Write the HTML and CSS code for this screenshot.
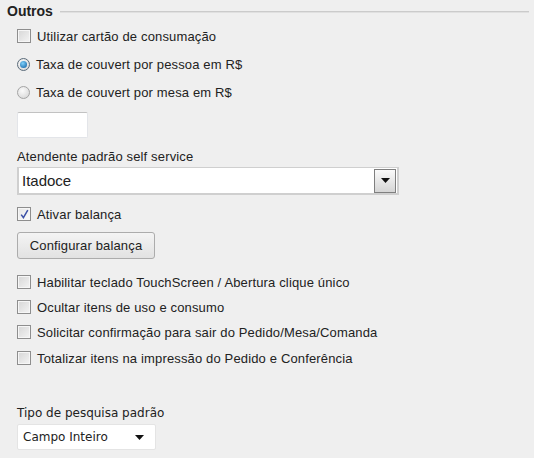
FILE: index.html
```html
<!DOCTYPE html>
<html lang="pt-BR">

<head>
    <meta charset="UTF-8">
    <meta name="viewport" content="width=device-width, initial-scale=1.0">
    <title>Outros</title>
    <link rel="stylesheet" href="styles.css">
</head>

<body>
    <div class="group">
        <div class="group-title">
            <span>Outros</span>
            <div class="group-line"></div>
        </div>

        <div class="group-body">
            <label class="opt first">
                <span class="check"></span>
                Utilizar cartão de consumação
            </label>
            <label class="opt">
                <span class="radio on"></span>
                Taxa de couvert por pessoa em R$
            </label>
            <label class="opt">
                <span class="radio"></span>
                Taxa de couvert por mesa em R$
            </label>

            <div class="text-box"></div>

            <div class="field-label">Atendente padrão self service</div>
            <div class="combo">
                <span class="combo-text">Itadoce</span>
                <span class="combo-btn">
                    <svg width="9" height="5" viewBox="0 0 9 5"><path d="M0 0h9L4.5 5z" fill="#111"/></svg>
                </span>
            </div>

            <label class="opt balanca">
                <span class="check on">
                    <svg width="11" height="11" viewBox="0 0 11 11"><path d="M2.2 5.6l2.2 3L8.8 1.2" fill="none" stroke="#3b50a6" stroke-width="1.5"/></svg>
                </span>
                Ativar balança
            </label>

            <div class="btn">Configurar balança</div>

            <div class="checks">
                <label class="opt">
                    <span class="check"></span>
                    Habilitar teclado TouchScreen / Abertura clique único
                </label>
                <label class="opt">
                    <span class="check"></span>
                    Ocultar itens de uso e consumo
                </label>
                <label class="opt">
                    <span class="check"></span>
                    Solicitar confirmação para sair do Pedido/Mesa/Comanda
                </label>
                <label class="opt last">
                    <span class="check"></span>
                    Totalizar itens na impressão do Pedido e Conferência
                </label>
            </div>

            <div class="search-label">Tipo de pesquisa padrão</div>
            <div class="select">
                <span>Campo Inteiro</span>
                <svg width="9" height="5" viewBox="0 0 9 5"><path d="M0 0h9L4.5 5z" fill="#111"/></svg>
            </div>
        </div>
    </div>
</body>

</html>
```

FILE: styles.css
```css
* {
    box-sizing: border-box;
}

body {
    margin: 0;
    width: 534px;
    height: 458px;
    background: #efefef;
    font-family: "Liberation Sans", Arial, sans-serif;
    font-size: 13px;
    letter-spacing: 0.15px;
    color: #222;
    overflow: hidden;
}

.group {
    padding: 0 5px 0 7px;
}

.group-title {
    display: flex;
    align-items: center;
    gap: 7px;
    height: 21px;
    font-size: 14px;
    font-weight: bold;
    letter-spacing: 0;
}

.group-line {
    flex: 1;
    height: 2px;
    margin-top: 3px;
    background: #cbcbcb;
    border-bottom: 1px solid #e0e0e0;
}

.group-body {
    display: flex;
    flex-direction: column;
    align-items: flex-start;
    padding-left: 10px;
}

.opt {
    display: flex;
    align-items: center;
    gap: 6px;
    height: 14px;
    margin-top: 14px;
    white-space: nowrap;
}

.opt.first {
    margin-top: 8px;
}

.check {
    flex: none;
    width: 14px;
    height: 14px;
    border: 1px solid #8e8e8e;
    background: linear-gradient(135deg, #d6d6d6, #f4f4f4);
    box-shadow: inset 0 0 0 1px #f6f6f6;
    display: flex;
    align-items: center;
    justify-content: center;
}

.check.on {
    background: linear-gradient(135deg, #e6e6e6, #fbfbfb);
}

.radio {
    flex: none;
    position: relative;
    width: 13px;
    height: 13px;
    border-radius: 50%;
    border: 1px solid #a4a4a4;
    background: radial-gradient(circle at 40% 35%, #fbfbfb, #d2d2d2);
}

.radio.on {
    border-color: #5a6b7a;
}

.radio.on::after {
    content: "";
    position: absolute;
    left: 2px;
    top: 2px;
    width: 7px;
    height: 7px;
    border-radius: 50%;
    background: radial-gradient(circle at 40% 35%, #7fd0fa, #0a5a9e);
}

.text-box {
    width: 71px;
    height: 26px;
    margin-top: 13px;
    background: #fff;
    border: 1px solid #e3e5e9;
    border-top-color: #c2c2c2;
    border-radius: 2px;
}

.field-label {
    margin-top: 12px;
    height: 14px;
    line-height: 14px;
}

.combo {
    width: 382px;
    height: 28px;
    margin-top: 3px;
    padding: 0 1px 0 3px;
    background: #fff;
    border: 2px solid #cfcfcf;
    border-top-width: 1px;
    display: flex;
    align-items: center;
    justify-content: space-between;
}

.combo-text {
    font-size: 15px;
    letter-spacing: 0;
}

.combo-btn {
    width: 22px;
    height: 24px;
    border: 1px solid #7f7f7f;
    background: linear-gradient(#fafafa, #d5d5d5);
    display: flex;
    align-items: center;
    justify-content: center;
}

.opt.balanca {
    margin-top: 12px;
}

.btn {
    width: 138px;
    height: 27px;
    margin-top: 11px;
    border: 1px solid #acacac;
    border-radius: 3px;
    background: linear-gradient(#f4f4f4, #e2e2e2);
    display: flex;
    align-items: center;
    justify-content: center;
}

.checks {
    margin-top: 16px;
    display: flex;
    flex-direction: column;
    gap: 11px;
}

.checks .opt {
    margin-top: 0;
}

.checks .opt.last {
    margin-top: 1px;
}

.search-label {
    margin-top: 41px;
    height: 14px;
    line-height: 14px;
    font-family: "DejaVu Sans", Verdana, sans-serif;
    font-size: 12px;
    letter-spacing: 0;
}

.select {
    width: 139px;
    height: 26px;
    margin-top: 4px;
    padding: 0 11px 0 5px;
    background: #fff;
    border: 1px solid #e4e4e4;
    border-radius: 2px;
    display: flex;
    align-items: center;
    justify-content: space-between;
    font-family: "DejaVu Sans", Verdana, sans-serif;
    font-size: 12px;
    letter-spacing: 0;
}
```
